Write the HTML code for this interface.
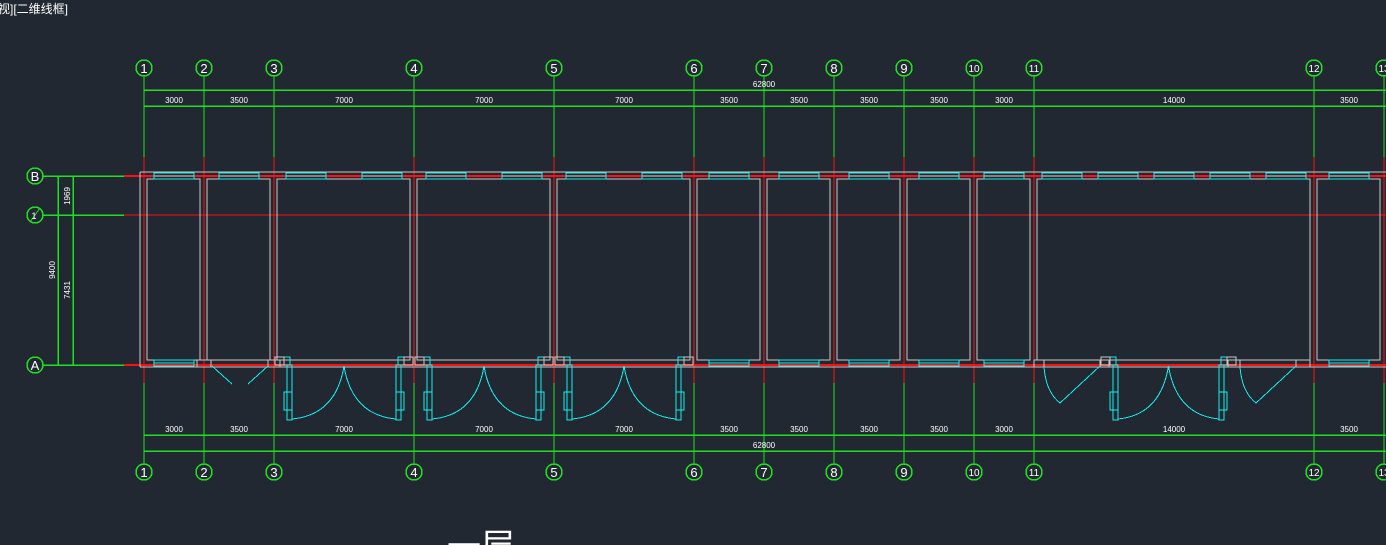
<!DOCTYPE html>
<html><head><meta charset="utf-8"><style>
html,body{margin:0;padding:0;background:#222831;width:1386px;height:545px;overflow:hidden}
svg{display:block}
text{font-family:"Liberation Sans","Noto Sans CJK SC",sans-serif;fill:#fff}
</style></head><body>
<svg id="s" width="1386" height="545" xmlns="http://www.w3.org/2000/svg" shape-rendering="crispEdges">
<g id="g"></g>
<text x="-2" y="13" font-size="12" fill="#ddd">视][二维线框]</text>
<g font-size="8" text-anchor="middle">
<text x="764" y="87">62800</text>
<text x="174" y="103">3000</text><text x="239" y="103">3500</text><text x="344" y="103">7000</text><text x="484" y="103">7000</text><text x="624" y="103">7000</text><text x="729" y="103">3500</text><text x="799" y="103">3500</text><text x="869" y="103">3500</text><text x="939" y="103">3500</text><text x="1004" y="103">3000</text><text x="1174" y="103">14000</text><text x="1349" y="103">3500</text>
<text x="174" y="432">3000</text><text x="239" y="432">3500</text><text x="344" y="432">7000</text><text x="484" y="432">7000</text><text x="624" y="432">7000</text><text x="729" y="432">3500</text><text x="799" y="432">3500</text><text x="869" y="432">3500</text><text x="939" y="432">3500</text><text x="1004" y="432">3000</text><text x="1174" y="432">14000</text><text x="1349" y="432">3500</text>
<text x="764" y="448">62800</text>
<text transform="translate(55,270) rotate(-90)">9400</text>
<text transform="translate(70,196) rotate(-90)">1969</text>
<text transform="translate(70,290) rotate(-90)">7431</text>
</g>
<g font-size="13" text-anchor="middle" font-family="Liberation Serif">
<text x="144" y="73">1</text><text x="204" y="73">2</text><text x="274" y="73">3</text><text x="414" y="73">4</text><text x="554" y="73">5</text><text x="694" y="73">6</text><text x="764" y="73">7</text><text x="834" y="73">8</text><text x="904" y="73">9</text><text x="974" y="72" font-size="10">10</text><text x="1034" y="72" font-size="10">11</text><text x="1314" y="72" font-size="10">12</text><text x="1384" y="72" font-size="10">13</text>
<text x="144" y="477">1</text><text x="204" y="477">2</text><text x="274" y="477">3</text><text x="414" y="477">4</text><text x="554" y="477">5</text><text x="694" y="477">6</text><text x="764" y="477">7</text><text x="834" y="477">8</text><text x="904" y="477">9</text><text x="974" y="476" font-size="10">10</text><text x="1034" y="476" font-size="10">11</text><text x="1314" y="476" font-size="10">12</text><text x="1384" y="476" font-size="10">13</text>
<text x="35" y="181">B</text><text x="35" y="370">A</text><text x="34" y="219" font-size="9">1</text>
</g>
<text x="447" y="558" font-size="34" font-family="Noto Sans CJK SC,sans-serif">一层</text>
</svg>
<script>
var g=document.getElementById('g'),h='';
function L(x1,y1,x2,y2,c,w){h+='<line x1="'+x1+'" y1="'+y1+'" x2="'+x2+'" y2="'+y2+'" stroke="'+c+'" stroke-width="'+(w||1)+'"/>';}
function R(x,y,w,hh,c){h+='<rect x="'+x+'" y="'+y+'" width="'+w+'" height="'+hh+'" fill="none" stroke="'+c+'" stroke-width="1"/>';}
function P(d,c){h+='<path d="'+d+'" fill="none" stroke="'+c+'" stroke-width="1"/>';}
var G='#1fe01f',RD='#ff1010',CY='#10f0f0',GR='#c8c8c8';
var X=[144,204,274,414,554,694,764,834,904,974,1034,1314,1384];
L(144,90,1386,90,G,1.5);L(144,106,1386,106,G,1.5);L(144,435,1386,435,G,1.5);L(144,451,1386,451,G,1.5);
[176,215,365].forEach(function(y){L(43,y,124,y,G,1.5);L(124,y,1386,y,RD,y==215?1:2);h+='<circle cx="35" cy="'+y+'" r="8" fill="none" stroke="'+G+'" stroke-width="1.5"/>';});
L(58,176,58,365,G,1.5);L(73,176,73,365,G,1.5);L(30,222,40,208,G,1);
X.forEach(function(x){
 h+='<circle cx="'+x+'" cy="68" r="8" fill="none" stroke="'+G+'" stroke-width="1.5"/>';
 h+='<circle cx="'+x+'" cy="472" r="8" fill="none" stroke="'+G+'" stroke-width="1.5"/>';
 L(x,76,x,157,G,1);L(x,157,x,383,RD,1);L(x,383,x,464,G,1);
});
L(140,172,1386,172,GR);L(140,172,140,367,GR);
for(var i=0;i<X.length-1;i++){var a=X[i]+3,b=X[i+1]-4;R(a,179,b-a,181,GR);}
L(140,367,1386,367,GR);
function win(x,y,w){R(x,y,w,6,CY);L(x,y+3,x+w,y+3,CY);}
for(var i=0;i<X.length-1;i++){var a=X[i],b=X[i+1],w=b-a;
 if(w<=80){win(a+(w-40)/2,173,40);}
 else if(w<=140){win(a+12,173,40);win(b-52,173,40);}
 else{var n=5,s=w/n;for(var k=0;k<n;k++)win(a+s*k+s/2-20,173,40);}
}
[[144,204],[694,764],[764,834],[834,904],[904,974],[974,1034],[1314,1384]].forEach(function(p){win((p[0]+p[1])/2-20,360,40);});
R(197,360,14,7,GR);R(268,360,12,7,GR);P('M212 366 L232 384 M268 366 L248 384',CY);
function dbl(a,b){var m=(a+b)/2;R(a,357,6,8,CY);R(a+3,365,5,55,CY);R(a,392,8,18,CY);
 R(b-6,357,6,8,CY);R(b-8,365,5,55,CY);R(b-8,392,8,18,CY);
 P('M'+(a+8)+' 419 Q'+(m-8)+' 415 '+m+' 366 Q'+(m+8)+' 415 '+(b-8)+' 419',CY);
 R(a-9,357,9,8,GR);R(b,357,9,8,GR);}
dbl(284,404);dbl(424,544);dbl(564,684);dbl(1110,1227);
R(1034,360,10,7,GR);R(1100,360,9,7,GR);P('M1044 367 Q1046 392 1060 403 L1100 366',CY);
R(1228,360,12,7,GR);R(1296,360,14,7,GR);P('M1240 367 Q1242 392 1256 403 L1296 366',CY);
g.innerHTML=h;
</script>
</body></html>
